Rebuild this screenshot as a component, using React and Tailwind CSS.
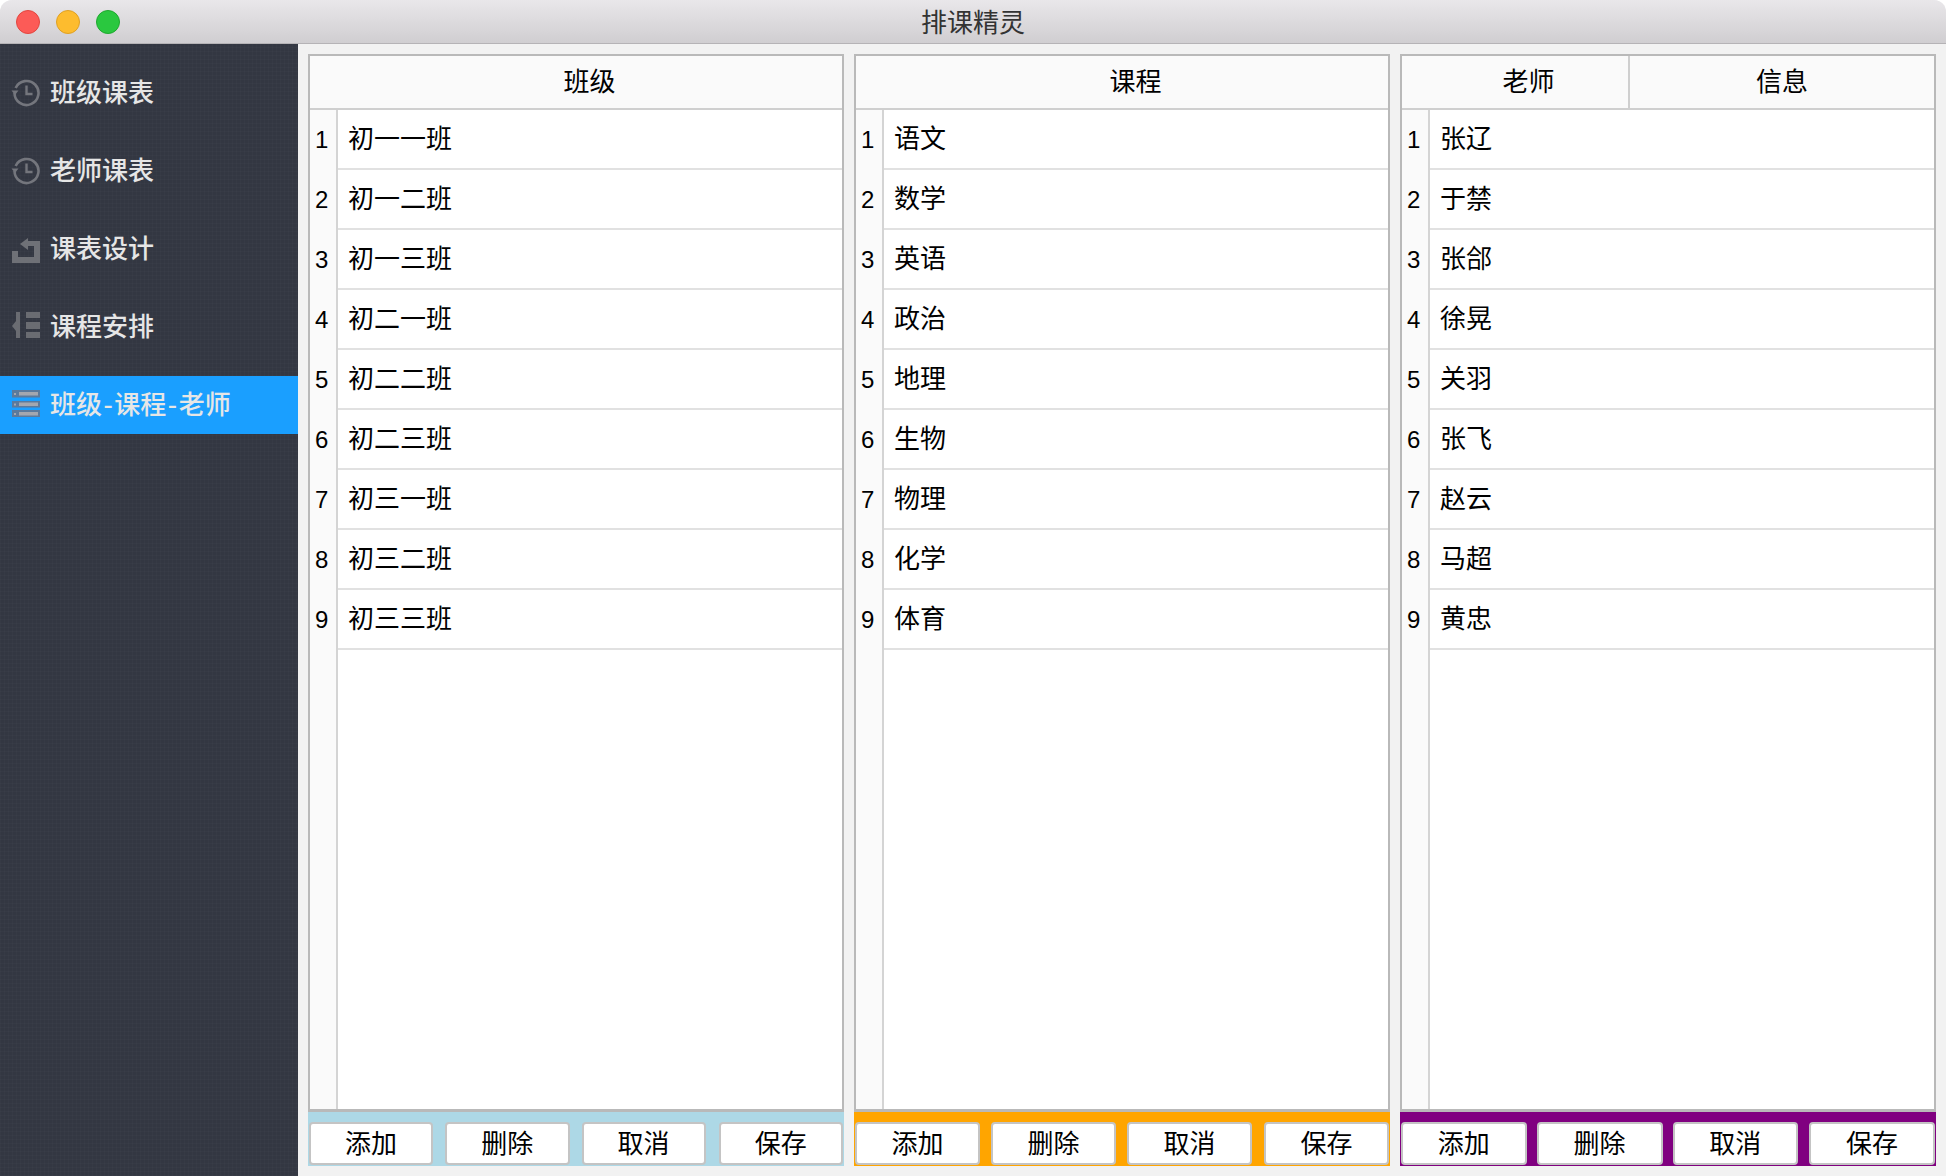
const SIDE_ITEMS = [
  { label: "班级课表", icon: "history" },
  { label: "老师课表", icon: "history" },
  { label: "课表设计", icon: "undo" },
  { label: "课程安排", icon: "outdent" },
  { label: "班级-课程-老师", icon: "server", active: true },
];

const PANELS = [
  {
    headers: ["班级"],
    rows: ["初一一班", "初一二班", "初一三班", "初二一班", "初二二班", "初二三班", "初三一班", "初三二班", "初三三班"],
    bar: "gap-[13px] bg-[#add8e6]",
  },
  {
    headers: ["课程"],
    rows: ["语文", "数学", "英语", "政治", "地理", "生物", "物理", "化学", "体育"],
    bar: "gap-[12px] bg-[#ffa500]",
  },
  {
    headers: ["老师", "信息"],
    rows: ["张辽", "于禁", "张郃", "徐晃", "关羽", "张飞", "赵云", "马超", "黄忠"],
    bar: "gap-[11px] bg-[#800080]",
  },
];

const ACTIONS = ["添加", "删除", "取消", "保存"];

function SideIcon({ name }) {
  if (name === "history") {
    return (
      <svg width="30" height="30" viewBox="0 0 30 30" fill="none" stroke="#74767d" strokeWidth="2.6">
        <path d="M4.620 9.930A12 12 0 1 1 3.500 15" />
        <path d="M0.500 12.500h7l-3.500 4.500z" fill="#74767d" stroke="none" />
        <path d="M15.500 7.500v8.500h6" strokeWidth="2.400" />
      </svg>
    );
  }
  if (name === "undo") {
    return (
      <svg width="30" height="30" viewBox="0 0 30 30" fill="#6f7177">
        <path d="M1 17h6v6h16V12h-6V7h12v22H1z" />
        <path d="M17 4v12L9 10z" />
      </svg>
    );
  }
  if (name === "outdent") {
    return (
      <svg width="30" height="30" viewBox="0 0 30 30" fill="#6a6c72">
        <path d="M5 0h4v26H5zM1 14l4-5v10z" />
        <path d="M15 0h14v6H15zM15 10h14v7H15zM15 20h14v6H15z" />
      </svg>
    );
  }
  return (
    <svg width="30" height="30" viewBox="0 0 30 30">
      <path d="M1 0h28v7.500H1zM1 11h28v6.500H1zM1 20h28v7H1z" fill="#5b7a9c" />
      <path d="M8 2h19v3.500H8zM8 12.500h19v3.500H8zM8 22h19v3.500H8z" fill="#a3a7b0" />
      <path d="M3 3h2v2H3zM3 13.500h2v2H3zM3 23h2v2H3z" fill="#a3a7b0" />
    </svg>
  );
}

function Panel({ panel }) {
  return (
    <section className="flex w-[536px] flex-col">
      <div className="flex min-h-0 flex-1 flex-col border-2 border-b-[3px] border-[#b9b9b9] bg-white">
        <div className="flex h-[54px] shrink-0 border-b-2 border-[#cfcfcf] bg-[#fafafa] pl-[27px]">
          {panel.headers.map((header, index) => (
            <div
              key={header}
              className={`flex items-center justify-center pb-[5px] text-[26px] text-black ${
                index === 0 && panel.headers.length > 1 ? "w-[201px] shrink-0 border-r-2 border-[#cfcfcf]" : "flex-1"
              }`}
            >
              {header}
            </div>
          ))}
        </div>
        <div className="flex min-h-0 flex-1">
          <div className="w-[28px] shrink-0 border-r-2 border-[#d4d4d4] bg-[#fafafa]">
            {panel.rows.map((_, index) => (
              <div key={index} className="flex h-[60px] items-center pl-[5px] font-['Liberation_Sans',sans-serif] text-[24px] text-black">
                {index + 1}
              </div>
            ))}
          </div>
          <div className="min-w-0 flex-1">
            {panel.rows.map((row) => (
              <div key={row} className="flex h-[60px] items-center border-b-2 border-[#e1e1e1] pb-[5px] pl-[10px] text-[26px] text-black">
                {row}
              </div>
            ))}
          </div>
        </div>
      </div>
      <div className={`flex h-[54px] shrink-0 items-end pb-px pl-px pr-px pt-[10px] ${panel.bar}`}>
        {ACTIONS.map((action, index) => (
          <button
            key={action}
            className={`flex h-[43px] flex-1 items-center justify-center rounded-[4px] border-2 border-[#c4c4c4] bg-white pb-[4px] text-[26px] text-black ${
              index === 1 ? "mx-[-1px]" : ""
            }`}
          >
            {action}
          </button>
        ))}
      </div>
    </section>
  );
}

export default function App() {
  return (
    <div className="flex h-[1176px] w-[1946px] flex-col overflow-hidden rounded-t-[12px] bg-[#f2f2f2] font-['Noto_Sans_CJK_SC',sans-serif]">
      <header className="relative flex h-[44px] shrink-0 items-center justify-center border-b border-[#b5b3b6] bg-gradient-to-b from-[#e9e7ea] to-[#d0ced1]">
        <div className="absolute left-[16px] top-[10px] flex gap-[16px]">
          <span className="h-[24px] w-[24px] rounded-full border border-[#e2463f] bg-[#fc5b57]" />
          <span className="h-[24px] w-[24px] rounded-full border border-[#dfa023] bg-[#fdbc2e]" />
          <span className="h-[24px] w-[24px] rounded-full border border-[#1fa82f] bg-[#2ac83f]" />
        </div>
        <span className="pb-[2px] text-[26px] text-[#333]">排课精灵</span>
      </header>
      <div className="flex min-h-0 flex-1">
        <nav className="w-[298px] shrink-0 bg-[#333742] bg-[repeating-linear-gradient(0deg,rgba(255,255,255,0.015)_0px,rgba(255,255,255,0.015)_1px,transparent_1px,transparent_4px),repeating-linear-gradient(90deg,rgba(255,255,255,0.015)_0px,rgba(255,255,255,0.015)_1px,transparent_1px,transparent_4px)] pt-[20px]">
          {SIDE_ITEMS.map((item) => (
            <div
              key={item.label}
              className={`mb-[20px] flex h-[58px] items-center gap-[9px] pl-[11px] text-[26px] font-medium text-[#e6e6e6] ${
                item.active ? "bg-[#1a9fff]" : ""
              }`}
            >
              <SideIcon name={item.icon} />
              <span className="pb-[5px]">
                {item.label.split("-").map((part, index) => (
                  <span key={part}>
                    {index > 0 ? <span className="px-[1.5px]">-</span> : null}
                    {part}
                  </span>
                ))}
              </span>
            </div>
          ))}
        </nav>
        <main className="flex min-w-0 flex-1 gap-[10px] pb-[10px] pl-[10px] pt-[10px]">
          {PANELS.map((panel) => (
            <Panel key={panel.headers[0]} panel={panel} />
          ))}
        </main>
      </div>
    </div>
  );
}
